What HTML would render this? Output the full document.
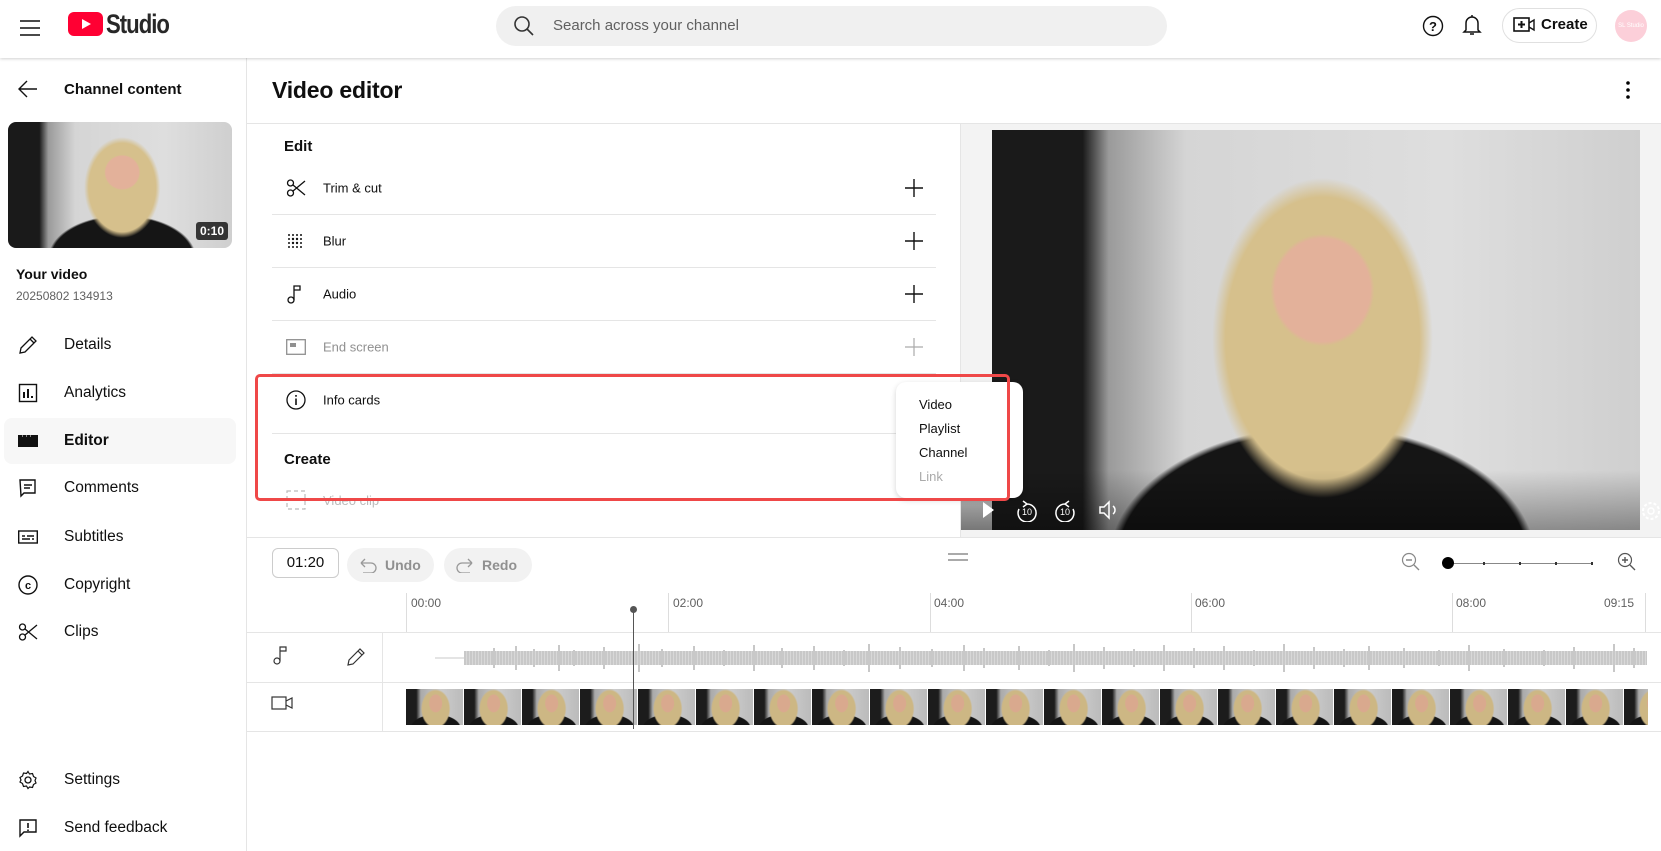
<!DOCTYPE html>
<html><head><meta charset="utf-8">
<style>
*{box-sizing:border-box;margin:0;padding:0}
body{width:1661px;height:851px;overflow:hidden;background:#fff;font-family:"Liberation Sans",Arial,sans-serif;color:#0f0f0f;position:relative}
.a{position:absolute}
.hdr{left:0;top:0;width:1661px;height:58px;background:#fff;box-shadow:0 1px 3px rgba(0,0,0,.18);z-index:5}
.side{left:0;top:58px;width:247px;height:793px;border-right:1px solid #e5e5e5}
.nav{position:absolute;left:0;width:247px;height:44px;font-size:15.5px;display:flex;align-items:center}
.nav .ic{position:absolute;left:18px;top:12px;width:20px;height:20px}
.nav span{position:absolute;left:64px}
.row{position:absolute;left:272px;width:664px;height:53px;border-bottom:1px solid #e5e5e5;font-size:13px}
.row .t{position:absolute;left:51px;top:50%;transform:translateY(-50%)}
.row .ic{position:absolute;left:14px;top:50%;transform:translateY(-50%)}
.plus{position:absolute;left:633px;top:50%;transform:translateY(-50%)}
.person{background:
 radial-gradient(ellipse 8% 14% at 51% 40%,#e3b19a 0 92%,transparent 100%),
 radial-gradient(ellipse 17% 40% at 51% 52%,#d6c08c 0 88%,transparent 100%),
 radial-gradient(ellipse 33% 34% at 51% 108%,#151515 0 96%,transparent 100%),
 linear-gradient(90deg,#1a1a1a 0 14%,#9a9a9a 18%,#d5d5d5 30%,#dedede 70%,#cfcfcf 100%)}
.thumb{width:57px;height:36px;margin-right:1px;flex:none;background:
 radial-gradient(ellipse 12% 26% at 52% 40%,#d9a98e 0 90%,transparent 100%),
 radial-gradient(ellipse 26% 55% at 52% 55%,#cdb784 0 90%,transparent 100%),
 radial-gradient(ellipse 45% 40% at 52% 110%,#151515 0 95%,transparent 100%),
 linear-gradient(90deg,#1c1c1c 0 18%,#aaa 26%,#ccc 60%,#bbb 100%)}
.pill{position:absolute;top:548px;height:34px;border-radius:17px;background:#f2f2f2;color:#909090;font-size:14px;font-weight:bold;display:flex;align-items:center}
.lbl{position:absolute;top:596px;font-size:12px;color:#606060}
.tick{position:absolute;top:593px;width:1px;height:39px;background:#ddd}
</style></head><body>

<div class="a hdr">
 <svg class="a" style="left:19px;top:17px" width="22" height="22" viewBox="0 0 22 22"><path d="M1 4h20M1 11h20M1 18h20" stroke="#0f0f0f" stroke-width="1.5"/></svg>
 <svg class="a" style="left:68px;top:12px" width="35" height="24" viewBox="0 0 35 24"><rect width="35" height="24" rx="6" fill="#ff0033"/><path d="M14 7l9 5-9 5z" fill="#fff"/></svg>
 <div class="a" style="left:106px;top:9px;font-size:27px;font-weight:bold;letter-spacing:-1.2px;transform:scaleX(.82);transform-origin:left;color:#282828">Studio</div>
 <div class="a" style="left:496px;top:6px;width:671px;height:40px;border-radius:20px;background:#f0f0f0"></div>
 <svg class="a" style="left:513px;top:15px" width="22" height="22" viewBox="0 0 22 22"><circle cx="9" cy="9" r="7" fill="none" stroke="#333" stroke-width="1.6"/><path d="M14 14l6 6" stroke="#333" stroke-width="1.6"/></svg>
 <div class="a" style="left:553px;top:17px;font-size:15px;color:#606060">Search across your channel</div>
 <svg class="a" style="left:1422px;top:15px" width="22" height="22" viewBox="0 0 22 22"><circle cx="11" cy="11" r="9.5" fill="none" stroke="#111" stroke-width="1.4"/><text x="11" y="16" font-size="13" text-anchor="middle" font-family="Liberation Sans" font-weight="bold" fill="#111">?</text></svg>
 <svg class="a" style="left:1461px;top:13px" width="22" height="24" viewBox="0 0 22 24"><path d="M11 2v2M5 17V10a6 6 0 0 1 12 0v7l2 2H3z" fill="none" stroke="#111" stroke-width="1.5"/><path d="M9 21h4" stroke="#111" stroke-width="1.5"/></svg>
 <div class="a" style="left:1502px;top:8px;width:95px;height:35px;border:1px solid #e0e0e0;border-radius:18px"></div>
 <svg class="a" style="left:1513px;top:16px" width="22" height="18" viewBox="0 0 22 18"><rect x="1" y="2" width="15" height="13" fill="none" stroke="#111" stroke-width="1.6"/><path d="M8.5 5v7M5 8.5h7" stroke="#111" stroke-width="2"/><path d="M16 7l5-3v10l-5-3" fill="none" stroke="#111" stroke-width="1.4"/></svg>
 <div class="a" style="left:1541px;top:16px;font-size:15px;font-weight:bold">Create</div>
 <div class="a" style="left:1615px;top:10px;width:32px;height:32px;border-radius:50%;background:#fccfd9;color:#fff;font-size:6px;text-align:center;line-height:32px">SL Studio</div>
</div>

<!-- sidebar -->
<div class="a side"></div>
<svg class="a" style="left:18px;top:80px" width="20" height="18" viewBox="0 0 20 18"><path d="M19 9H2M9 1L1 9l8 8" fill="none" stroke="#111" stroke-width="1.4"/></svg>
<div class="a" style="left:64px;top:81px;font-size:15px;font-weight:bold">Channel content</div>
<div class="a person" style="left:8px;top:122px;width:224px;height:126px;border-radius:8px;overflow:hidden"><div class="a" style="right:4px;bottom:8px;background:rgba(0,0,0,.75);color:#fff;font-size:12px;font-weight:bold;padding:2px 4px;border-radius:3px">0:10</div></div>
<div class="a" style="left:16px;top:266px;font-size:14px;font-weight:bold">Your video</div>
<div class="a" style="left:16px;top:289px;font-size:12px;color:#606060">20250802 134913</div>

<div class="nav" style="top:323px"><svg class="ic" viewBox="0 0 20 20"><path d="M2 18l1-5L14 2l4 4L7 17z M12 4l4 4" fill="none" stroke="#111" stroke-width="1.3"/></svg><span>Details</span></div>
<div class="nav" style="top:371px"><svg class="ic" viewBox="0 0 20 20"><rect x="1.5" y="1.5" width="17" height="17" fill="none" stroke="#111" stroke-width="1.4"/><path d="M6 15V9M10 15V6M14 15v-2" stroke="#111" stroke-width="2"/></svg><span>Analytics</span></div>
<div class="a" style="left:4px;top:418px;width:232px;height:46px;border-radius:8px;background:#f7f7f7"></div>
<div class="nav" style="top:419px"><svg class="ic" viewBox="0 0 20 20"><rect x="0" y="4" width="20" height="12" fill="#111"/><path d="M4 5h1M8 5h1M12 5h1" stroke="#fff" stroke-width="1"/></svg><span style="font-weight:bold">Editor</span></div>
<div class="nav" style="top:466px"><svg class="ic" viewBox="0 0 20 20"><path d="M2 2h15v13H6l-3 3z" fill="none" stroke="#111" stroke-width="1.4"/><path d="M6 7h8M6 10h6" stroke="#111" stroke-width="1.4"/></svg><span>Comments</span></div>
<div class="nav" style="top:515px"><svg class="ic" viewBox="0 0 20 20"><rect x="0.7" y="4" width="18.6" height="12" fill="none" stroke="#111" stroke-width="1.4"/><path d="M4 9h3M9 9h7M4 12h8M14 12h2" stroke="#111" stroke-width="1.4"/></svg><span>Subtitles</span></div>
<div class="nav" style="top:563px"><svg class="ic" viewBox="0 0 20 20"><circle cx="10" cy="10" r="9" fill="none" stroke="#111" stroke-width="1.4"/><text x="10" y="14" font-size="11" text-anchor="middle" font-weight="bold" font-family="Liberation Sans" fill="#111">c</text></svg><span>Copyright</span></div>
<div class="nav" style="top:610px"><svg class="ic" viewBox="0 0 20 20"><circle cx="4.5" cy="15" r="3" fill="none" stroke="#111" stroke-width="1.3"/><circle cx="4.5" cy="5" r="3" fill="none" stroke="#111" stroke-width="1.3"/><path d="M7 7l12 10M7 13L19 3" stroke="#111" stroke-width="1.3"/></svg><span>Clips</span></div>
<div class="nav" style="top:758px"><svg class="ic" viewBox="0 0 20 20"><circle cx="10" cy="10" r="3" fill="none" stroke="#111" stroke-width="1.3"/><path d="M10 1.5l1.5 2.5 3-.5 1 3 2.5 1.5-1 2.5 1 2.5-2.5 1.5-1 3-3-.5L10 18.5l-1.5-2.5-3 .5-1-3L2 12l1-2-1-2.5 2.5-1.5 1-3 3 .5z" fill="none" stroke="#111" stroke-width="1.2"/></svg><span>Settings</span></div>
<div class="nav" style="top:806px"><svg class="ic" viewBox="0 0 20 20"><path d="M2 2h16v12H6l-4 4z" fill="none" stroke="#111" stroke-width="1.4"/><path d="M10 5v5M10 11.5v1.5" stroke="#111" stroke-width="1.6"/></svg><span>Send feedback</span></div>

<!-- main -->
<div class="a" style="left:272px;top:77px;font-size:23px;font-weight:bold;letter-spacing:-.2px">Video editor</div>
<svg class="a" style="left:1624px;top:80px" width="8" height="20" viewBox="0 0 8 20"><circle cx="4" cy="3" r="1.8"/><circle cx="4" cy="10" r="1.8"/><circle cx="4" cy="17" r="1.8"/></svg>
<div class="a" style="left:247px;top:123px;width:1414px;height:1px;background:#e5e5e5"></div>

<div class="a" style="left:284px;top:138px;font-size:15px;font-weight:bold">Edit</div>
<div class="row" style="top:162px"><svg class="ic" width="20" height="20" viewBox="0 0 20 20"><circle cx="4.5" cy="15" r="3" fill="none" stroke="#111" stroke-width="1.3"/><circle cx="4.5" cy="5" r="3" fill="none" stroke="#111" stroke-width="1.3"/><path d="M7 7l12 10M7 13L19 3" stroke="#111" stroke-width="1.3"/></svg><span class="t">Trim &amp; cut</span><svg class="plus" width="18" height="18"><path d="M9 0v18M0 9h18" stroke="#111" stroke-width="1.4"/></svg></div>
<div class="row" style="top:215px"><svg class="ic" width="18" height="18" viewBox="0 0 18 18" fill="#111"><g><circle cx="3" cy="3" r="1"/><circle cx="7" cy="3" r="1"/><circle cx="11" cy="3" r="1"/><circle cx="15" cy="3" r="1"/><circle cx="3" cy="7" r="1"/><circle cx="7" cy="7" r="1.2"/><circle cx="11" cy="7" r="1.2"/><circle cx="15" cy="7" r="1"/><circle cx="3" cy="11" r="1"/><circle cx="7" cy="11" r="1.2"/><circle cx="11" cy="11" r="1.2"/><circle cx="15" cy="11" r="1"/><circle cx="3" cy="15" r="1"/><circle cx="7" cy="15" r="1"/><circle cx="11" cy="15" r="1"/><circle cx="15" cy="15" r="1"/></g></svg><span class="t">Blur</span><svg class="plus" width="18" height="18"><path d="M9 0v18M0 9h18" stroke="#111" stroke-width="1.4"/></svg></div>
<div class="row" style="top:268px"><svg class="ic" width="18" height="20" viewBox="0 0 18 20"><circle cx="5" cy="16" r="3" fill="none" stroke="#111" stroke-width="1.3"/><path d="M8 16V2h6v4H8" fill="none" stroke="#111" stroke-width="1.3"/></svg><span class="t">Audio</span><svg class="plus" width="18" height="18"><path d="M9 0v18M0 9h18" stroke="#111" stroke-width="1.4"/></svg></div>
<div class="row" style="top:321px;color:#909090"><svg class="ic" width="20" height="16" viewBox="0 0 20 16"><rect x="0.7" y="0.7" width="18.6" height="14.6" fill="none" stroke="#909090" stroke-width="1.3"/><rect x="4" y="4" width="6" height="4" fill="#909090"/></svg><span class="t">End screen</span><svg class="plus" width="18" height="18"><path d="M9 0v18M0 9h18" stroke="#aaa" stroke-width="1.2"/></svg></div>
<div class="row" style="top:378px;height:56px"><svg class="ic" style="top:22px" width="20" height="20" viewBox="0 0 20 20"><circle cx="10" cy="10" r="9" fill="none" stroke="#111" stroke-width="1.3"/><path d="M10 8.5v6.5M10 5v1.8" stroke="#111" stroke-width="1.6"/></svg><span class="t" style="top:22px">Info cards</span></div>
<div class="a" style="left:284px;top:451px;font-size:15px;font-weight:bold">Create</div>
<div class="a" style="left:323px;top:493px;font-size:13px;color:#bbb">Video clip</div>
<svg class="a" style="left:286px;top:490px" width="20" height="20" viewBox="0 0 20 20"><path d="M1 1h18v18H1z" fill="none" stroke="#bbb" stroke-width="1.2" stroke-dasharray="4 3"/></svg>

<!-- preview -->
<div class="a" style="left:960px;top:124px;width:1px;height:414px;background:#e5e5e5"></div>
<div class="a" style="left:961px;top:124px;width:700px;height:413px;background:#f3f3f3"></div>
<div class="a" style="left:961px;top:450px;width:31px;height:80px;background:linear-gradient(#f3f3f3,#777)"></div>
<div class="a person" style="left:992px;top:130px;width:648px;height:400px;overflow:hidden">
 <div class="a" style="left:0;bottom:0;width:100%;height:60px;background:linear-gradient(transparent,rgba(0,0,0,.35))"></div>
</div>
<svg class="a" style="left:975px;top:498px" width="210" height="24" viewBox="0 0 210 24" fill="none" stroke="#fff" stroke-width="1.5">
 <path d="M8 4l11 8-11 8z" fill="#fff" stroke="none"/>
 <path d="M52 6a9 9 0 1 1-8 5M52 6l-4-3M52 6l-4 3"/><text x="52" y="17" font-size="9" fill="#fff" stroke="none" text-anchor="middle" font-family="Liberation Sans">10</text>
 <path d="M90 6a9 9 0 1 0 8 5M90 6l4-3M90 6l4 3"/><text x="90" y="17" font-size="9" fill="#fff" stroke="none" text-anchor="middle" font-family="Liberation Sans">10</text>
 <path d="M125 9h4l5-5v16l-5-5h-4zM138 8a5 5 0 0 1 0 8"/>
</svg>
<svg class="a" style="left:1640px;top:500px" width="21" height="22" viewBox="0 0 21 22"><circle cx="11" cy="11" r="3" fill="none" stroke="#fff" stroke-width="1.4"/><circle cx="11" cy="11" r="8" fill="none" stroke="#fff" stroke-width="2" stroke-dasharray="3 2"/></svg>

<!-- red box + menu -->
<div class="a" style="left:896px;top:382px;width:127px;height:116px;background:#fff;border-radius:10px;box-shadow:0 2px 6px rgba(0,0,0,.18);font-size:13px">
 <div class="a" style="left:23px;top:15px">Video</div>
 <div class="a" style="left:23px;top:39px">Playlist</div>
 <div class="a" style="left:23px;top:63px">Channel</div>
 <div class="a" style="left:23px;top:87px;color:#aaa">Link</div>
</div>
<div class="a" style="left:255px;top:374px;width:755px;height:127px;border:3px solid #ef4848;border-radius:5px"></div>

<!-- toolbar -->
<div class="a" style="left:247px;top:537px;width:1414px;height:1px;background:#e5e5e5"></div>
<div class="a" style="left:272px;top:548px;width:67px;height:30px;border:1px solid #ccc;border-radius:6px;font-size:15px;text-align:center;line-height:28px">01:20</div>
<div class="pill" style="left:347px;width:87px"><svg style="margin:0 8px 0 12px" width="18" height="16" viewBox="0 0 18 16"><path d="M2 6h10a5 5 0 0 1 0 10H4M2 6l4-4M2 6l4 4" fill="none" stroke="#999" stroke-width="1.3"/></svg>Undo</div>
<div class="pill" style="left:444px;width:88px"><svg style="margin:0 8px 0 12px" width="18" height="16" viewBox="0 0 18 16"><path d="M16 6H6a5 5 0 0 0 0 10h8M16 6l-4-4M16 6l-4 4" fill="none" stroke="#999" stroke-width="1.3"/></svg>Redo</div>
<svg class="a" style="left:948px;top:553px" width="20" height="8"><path d="M0 1h20M0 7h20" stroke="#777" stroke-width="1.2"/></svg>
<svg class="a" style="left:1401px;top:552px" width="20" height="20" viewBox="0 0 20 20"><circle cx="8" cy="8" r="6.5" fill="none" stroke="#888" stroke-width="1.2"/><path d="M5 8h6M13 13l5 5" stroke="#888" stroke-width="1.4"/></svg>
<div class="a" style="left:1447px;top:563px;width:146px;height:1px;background:#888"></div>
<div class="a" style="left:1442px;top:557px;width:12px;height:12px;border-radius:50%;background:#000"></div>
<div class="a" style="left:1483px;top:562px;width:2px;height:3px;background:#333"></div>
<div class="a" style="left:1519px;top:562px;width:2px;height:3px;background:#333"></div>
<div class="a" style="left:1555px;top:562px;width:2px;height:3px;background:#333"></div>
<div class="a" style="left:1591px;top:562px;width:2px;height:3px;background:#333"></div>
<svg class="a" style="left:1617px;top:552px" width="20" height="20" viewBox="0 0 20 20"><circle cx="8" cy="8" r="6.5" fill="none" stroke="#555" stroke-width="1.2"/><path d="M5 8h6M8 5v6M13 13l5 5" stroke="#555" stroke-width="1.4"/></svg>

<!-- ruler -->
<div class="tick" style="left:406px"></div><div class="lbl" style="left:411px">00:00</div>
<div class="tick" style="left:668px"></div><div class="lbl" style="left:673px">02:00</div>
<div class="tick" style="left:930px"></div><div class="lbl" style="left:934px">04:00</div>
<div class="tick" style="left:1191px"></div><div class="lbl" style="left:1195px">06:00</div>
<div class="tick" style="left:1452px"></div><div class="lbl" style="left:1456px">08:00</div>
<div class="tick" style="left:1645px"></div><div class="lbl" style="left:1604px">09:15</div>
<div class="a" style="left:247px;top:632px;width:1414px;height:1px;background:#e5e5e5"></div>
<div class="a" style="left:247px;top:682px;width:1414px;height:1px;background:#e5e5e5"></div>
<div class="a" style="left:247px;top:731px;width:1414px;height:1px;background:#e5e5e5"></div>
<div class="a" style="left:382px;top:632px;width:1px;height:99px;background:#e5e5e5"></div>
<svg class="a" style="left:272px;top:645px" width="18" height="20" viewBox="0 0 18 20"><circle cx="5" cy="16" r="3" fill="none" stroke="#333" stroke-width="1.2"/><path d="M8 16V2h6v4H8" fill="none" stroke="#333" stroke-width="1.2"/></svg>
<svg class="a" style="left:346px;top:647px" width="20" height="20" viewBox="0 0 20 20"><path d="M2 18l1-5L14 2l4 4L7 17z M12 4l4 4" fill="none" stroke="#333" stroke-width="1.2"/></svg>
<svg class="a" style="left:271px;top:695px" width="22" height="16" viewBox="0 0 22 16"><rect x="1" y="2" width="14" height="12" fill="none" stroke="#333" stroke-width="1.2"/><path d="M15 6l6-3v10l-6-3" fill="none" stroke="#333" stroke-width="1.2"/></svg>

<!-- waveform -->
<div class="a" style="left:464px;top:651px;width:1183px;height:14px;background:repeating-linear-gradient(90deg,#c8c8c8 0 2px,#d8d8d8 2px 3px)"></div>
<div class="a" style="left:435px;top:657px;width:29px;height:2px;background:#e4e4e4"></div>
<svg class="a" style="left:464px;top:640px" width="1183" height="36" viewBox="0 0 1183 36">
<g stroke="#c8c8c8" stroke-width="2">
<path d="M30 8v20M52 6v24M70 9v18M95 5v26M110 10v16M140 7v22M175 4v28M198 9v18M230 6v24M260 10v16M290 5v26M318 8v20M350 6v24M380 10v16M405 4v28M436 7v22M468 9v18M500 5v26M520 8v20M555 6v24M585 10v16M610 4v28M640 7v22M670 9v18M700 5v26M730 8v20M760 6v24M790 10v16M820 4v28M850 7v22M880 9v18M905 6v24M940 8v20M975 10v16M1005 5v26M1040 9v18M1080 10v16M1110 7v22M1150 4v28M1170 8v20"/>
</g></svg>

<!-- thumbnails -->
<div class="a" style="left:406px;top:689px;width:1242px;height:36px;overflow:hidden;display:flex">
<div class="thumb"></div><div class="thumb"></div><div class="thumb"></div><div class="thumb"></div><div class="thumb"></div><div class="thumb"></div><div class="thumb"></div><div class="thumb"></div><div class="thumb"></div><div class="thumb"></div><div class="thumb"></div><div class="thumb"></div><div class="thumb"></div><div class="thumb"></div><div class="thumb"></div><div class="thumb"></div><div class="thumb"></div><div class="thumb"></div><div class="thumb"></div><div class="thumb"></div><div class="thumb"></div><div class="thumb"></div>
</div>

<!-- playhead -->
<div class="a" style="left:633px;top:609px;width:1px;height:120px;background:#555"></div>
<div class="a" style="left:630px;top:606px;width:7px;height:7px;border-radius:50%;background:#555"></div>

</body></html>
